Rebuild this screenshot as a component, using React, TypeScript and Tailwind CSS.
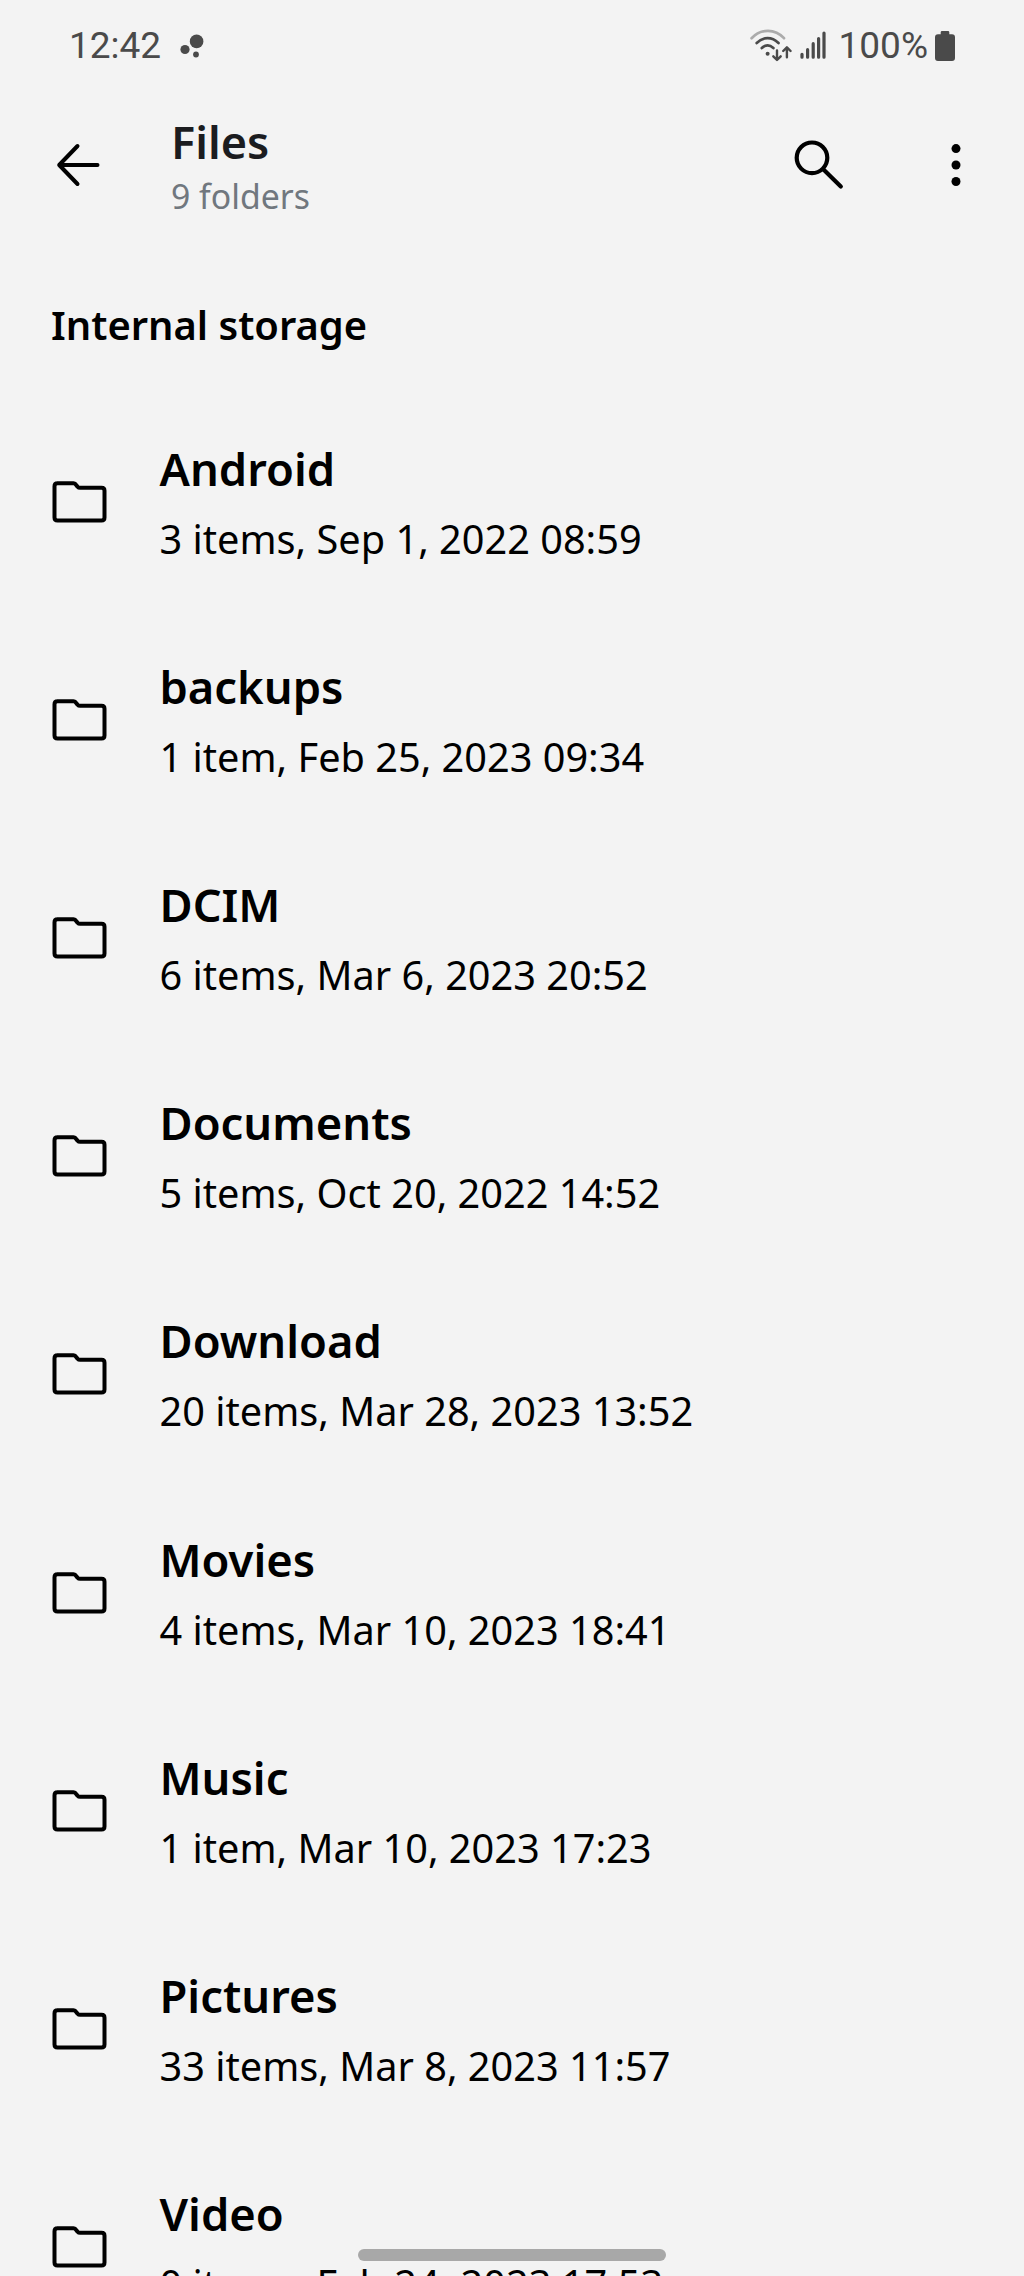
const folders = [
  { name: 'Android', detail: '3 items, Sep 1, 2022 08:59' },
  { name: 'backups', detail: '1 item, Feb 25, 2023 09:34' },
  { name: 'DCIM', detail: '6 items, Mar 6, 2023 20:52' },
  { name: 'Documents', detail: '5 items, Oct 20, 2022 14:52' },
  { name: 'Download', detail: '20 items, Mar 28, 2023 13:52' },
  { name: 'Movies', detail: '4 items, Mar 10, 2023 18:41' },
  { name: 'Music', detail: '1 item, Mar 10, 2023 17:23' },
  { name: 'Pictures', detail: '33 items, Mar 8, 2023 11:57' },
  { name: 'Video', detail: '0 items, Feb 24, 2023 17:53' },
];

function NotificationDots() {
  return (
    <svg width="24" height="24" viewBox="0 0 24 24" fill="#4a4a4a">
      <circle cx="16.6" cy="7.4" r="6.8" />
      <circle cx="5" cy="15.5" r="4.6" />
      <circle cx="16" cy="20.5" r="2.9" />
    </svg>
  );
}

function WifiIcon() {
  return (
    <svg className="overflow-visible" width="42" height="32" viewBox="0 0 42 32" fill="none" stroke="#4a4a4a" strokeWidth="2.7" strokeLinecap="round" strokeLinejoin="round">
      <path d="M1.6 8.2C11 -1.6 25 -1.6 34 8.2" stroke="#ababab" />
      <path d="M6.7 13C13.5 6.6 21.700 6.600 28.500 13" />
      <path d="M11.800 18C15.400 14.800 19.800 14.800 23.400 18" />
      <circle cx="17.600" cy="23.800" r="2" fill="#4a4a4a" stroke="none" />
      <path d="M27 20.500V29.500M23.300 26.300L27 30L30.700 26.300" strokeWidth="2.400" />
      <path d="M36.900 27.200V17.600M33.200 21L36.900 17.300L40.600 21" strokeWidth="2.400" />
    </svg>
  );
}

function SignalIcon() {
  return (
    <svg width="26" height="30" viewBox="0 0 26 30" stroke="#4a4a4a" strokeWidth="3.200" strokeLinecap="round">
      <path d="M2 23.300V26.200M7.600 18.700V26.200M13.200 12.700V26.200M18.600 7.500V26.200M24 2V26.200" />
    </svg>
  );
}

function BatteryIcon() {
  return (
    <svg width="20" height="30" viewBox="0 0 20 30" fill="#4a4a4a">
      <path d="M7 0H13Q14.300 0 14.300 1.300V3.300H17Q20 3.300 20 6.300V27Q20 30 17 30H3Q0 30 0 27V6.300Q0 3.300 3 3.300H5.700V1.300Q5.700 0 7 0Z" />
    </svg>
  );
}

function BackIcon() {
  return (
    <svg width="44" height="44" viewBox="0 0 44 44" fill="none" stroke="#000" strokeWidth="4" strokeLinecap="round" strokeLinejoin="round">
      <path d="M21.500 3L3.200 22L21.500 41M3.200 22H41.500" />
    </svg>
  );
}

function SearchIcon() {
  return (
    <svg width="50" height="50" viewBox="0 0 50 50" fill="none" stroke="#000" strokeWidth="4.200" strokeLinecap="round">
      <circle cx="18" cy="17.800" r="15.300" />
      <path d="M29.500 29.500L46.800 46.500" />
    </svg>
  );
}

function MoreIcon() {
  return (
    <svg width="10" height="42" viewBox="0 0 10 42" fill="#000">
      <circle cx="5" cy="4.600" r="4.500" />
      <circle cx="5" cy="21" r="4.500" />
      <circle cx="5" cy="37.500" r="4.500" />
    </svg>
  );
}

function FolderIcon() {
  return (
    <svg className="shrink-0" width="55" height="42" viewBox="0 0 55 42" fill="none" stroke="#000" strokeWidth="4" strokeLinejoin="round">
      <path d="M5 2.300H21.500Q22.700 2.300 23.500 3.200L25.500 5.600Q26.600 6.800 28 6.800H49.500Q52.500 6.800 52.500 9.800V36.500Q52.500 39.500 49.500 39.500H5.500Q2.500 39.500 2.500 36.500V5.300Q2.500 2.300 5.500 2.300Z" />
    </svg>
  );
}

export default function App() {
  return (
    <div className="relative flex h-[2276px] w-[1024px] flex-col overflow-hidden bg-[#f3f3f3] font-['Noto_Sans',sans-serif] text-black">
      <header className="flex h-[92px] shrink-0 items-center justify-between pr-[69px] pl-[69px] font-['Roboto',sans-serif] text-[37px] leading-[44px] text-[#4a4a4a]">
        <div className="flex items-center gap-[19px]">
          <span>12:42</span>
          <NotificationDots />
        </div>
        <div className="flex items-center">
          <WifiIcon />
          <span className="ml-[8px]"><SignalIcon /></span>
          <span className="mr-[7px] ml-[13px]">100%</span>
          <BatteryIcon />
        </div>
      </header>

      <div className="flex h-[146px] shrink-0 items-center pr-[63px] pl-[56px]">
        <button aria-label="Back"><BackIcon /></button>
        <div className="mt-[2px] ml-[71px] flex-1">
          <h1 className="text-[45px] leading-[60px] font-semibold text-[#1b1c1f]">Files</h1>
          <p className="text-[33.8px] leading-[48px] text-[#70777e]">9 folders</p>
        </div>
        <button aria-label="Search" className="mr-[107px]"><SearchIcon /></button>
        <button aria-label="More options"><MoreIcon /></button>
      </div>

      <h2 className="mt-[61px] mb-[42px] shrink-0 pl-[51px] text-[39.9px] leading-[52px] font-semibold">Internal storage</h2>

      <ul className="shrink-0">
        {folders.map((folder) => (
          <li key={folder.name} className="flex h-[218.1px] items-center gap-[52.500px] pl-[52px]">
            <FolderIcon />
            <div className="flex flex-col gap-[14px] whitespace-nowrap">
              <span className="text-[45.3px] leading-[60px] font-semibold">{folder.name}</span>
              <span className="text-[39.7px] leading-[52px]">{folder.detail}</span>
            </div>
          </li>
        ))}
      </ul>

      <div className="absolute bottom-[15px] left-[358px] h-[12px] w-[308px] rounded-full bg-[#a8a8a8]" />
    </div>
  );
}
